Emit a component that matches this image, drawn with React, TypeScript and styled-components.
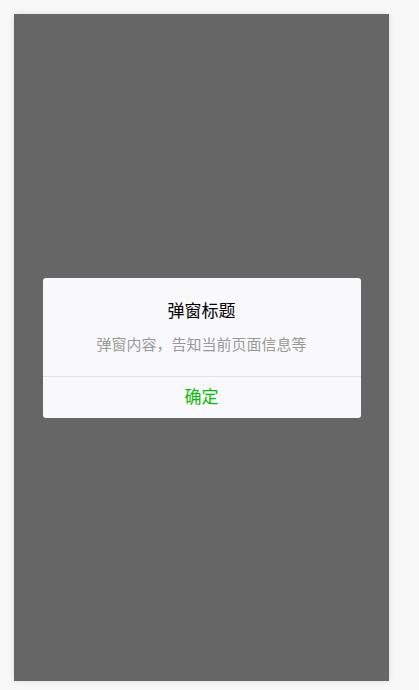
import React from 'react';
import styled, { createGlobalStyle } from 'styled-components';

const GlobalStyle = createGlobalStyle`
  html, body {
    margin: 0;
    padding: 0;
    background: #f8f8f8;
    font-family: "Noto Sans CJK SC", "Noto Sans", sans-serif;
  }
`;

const Page = styled.div`
  padding: 14px;
`;

const Phone = styled.div`
  width: 375px;
  height: 667px;
  background: #666666;
  box-shadow: 0 0 6px rgba(0, 0, 0, 0.12);
  display: flex;
  align-items: center;
  justify-content: center;
`;

const Dialog = styled.div`
  width: 318px;
  background: #f9f9fb;
  border-radius: 3px;
  overflow: hidden;
  text-align: center;
`;

const Header = styled.div`
  padding: 22px 24px 0;
`;

const Title = styled.div`
  font-size: 17px;
  line-height: 20px;
  color: #000000;
`;

const Body = styled.div`
  padding: 14px 24px 22px;
  font-size: 15px;
  line-height: 20px;
  color: #999999;
`;

const Footer = styled.div`
  border-top: 1px solid #e3e3e5;
  display: flex;
`;

const FooterButton = styled.a<{ $primary?: boolean }>`
  flex: 1;
  line-height: 37px;
  padding-bottom: 4px;
  font-size: 17px;
  color: ${(p) => (p.$primary ? '#09bb07' : '#353535')};
  text-decoration: none;
  cursor: pointer;
`;

export default function App() {
  return (
    <>
      <GlobalStyle />
      <Page>
        <Phone>
          <Dialog>
            <Header>
              <Title>弹窗标题</Title>
            </Header>
            <Body>弹窗内容，告知当前页面信息等</Body>
            <Footer>
              <FooterButton $primary>确定</FooterButton>
            </Footer>
          </Dialog>
        </Phone>
      </Page>
    </>
  );
}
